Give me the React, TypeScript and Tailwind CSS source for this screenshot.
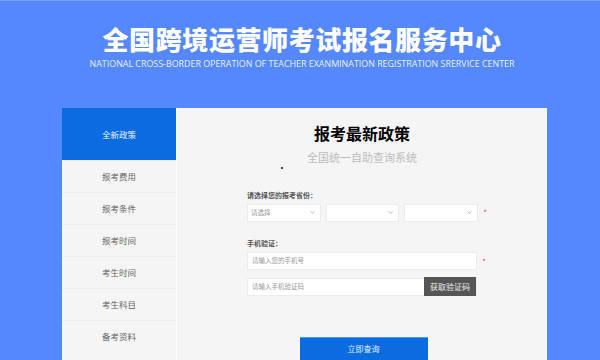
import { ChevronDown } from 'lucide-react'

const cjk = { fontFamily: '"Noto Sans CJK SC", "Noto Sans", sans-serif' }

const menu = ['报考费用', '报考条件', '报考时间', '考生时间', '考生科目', '备考资料']

const Select = ({ label }: { label?: string }) => (
  <div className="flex h-[18px] items-center justify-between border border-[#ececec] bg-white pl-[3px] pr-[4px]">
    <span className="text-[6.5px] text-[#999]">{label}</span>
    <ChevronDown size={7} strokeWidth={2} className="text-[#888]" />
  </div>
)

export default function App() {
  return (
    <div className="h-[360px] w-[600px] overflow-hidden border-t border-[#7aa2fd] bg-[#5488fc]" style={cjk}>
      <div className="flex h-[107px] flex-col items-center pt-[22px] pl-[4px]">
        <h1 className="text-[26px] leading-[32px] font-black tracking-[0.6px] text-white">
          全国跨境运营师考试报名服务中心
        </h1>
        <p className="mt-[3px] text-[8.9px] leading-[12px] text-[#e8efff]" style={{ fontFamily: '"Open Sans", sans-serif' }}>
          NATIONAL CROSS-BORDER OPERATION OF TEACHER EXANMINATION REGISTRATION SRERVICE CENTER
        </p>
      </div>

      <div className="ml-[62px] flex h-[260px] w-[485px] bg-[#f5f5f5]">
        <div className="w-[115px] border-r border-white">
          <div className="flex h-[52px] items-center justify-center bg-[#0a6ce0] text-[8.5px] text-[#e6efff]">全新政策</div>
          {menu.map((m) => (
            <div key={m} className="flex h-[32px] items-center justify-center border-t border-[#ededed] text-[8.5px] text-[#666]">
              {m}
            </div>
          ))}
        </div>

        <div className="flex flex-1 flex-col items-center">
          <h2 className="mt-[15px] text-[16px] leading-[20px] font-bold text-black">报考最新政策</h2>
          <p className="mt-[7px] text-[11px] leading-[14px] text-[#bdbdbd]">全国统一自助查询系统</p>
          <div className="mt-[3px] ml-[-160px] h-[1.5px] w-[1.5px] bg-[#444]" />

          <div className="mt-[21px] w-[230px]">
            <div className="text-[7px] leading-[10px] font-bold text-[#555]">请选择您的报考省份：</div>
            <div className="relative mt-[4px] grid grid-cols-[74px_73px_74px] gap-[5px]">
              <Select label="请选择" />
              <Select />
              <Select />
              <span className="absolute top-[4px] right-[-10px] text-[8px] leading-[10px] text-[#f04848]">*</span>
            </div>

            <div className="mt-[16px] text-[7px] leading-[10px] font-bold text-[#555]">手机验证：</div>
            <div className="relative mt-[4px] flex h-[18px] w-[230px] items-center border border-[#ececec] bg-white pl-[4px] text-[6.5px] text-[#999]">
              请输入您的手机号
              <span className="absolute top-[4px] right-[-10px] text-[8px] leading-[10px] text-[#f04848]">*</span>
            </div>
            <div className="mt-[8px] flex h-[18px] w-[230px] items-center justify-between border border-[#ececec] bg-white pl-[4px] text-[6.5px] text-[#999]">
              请输入手机验证码
              <span className="flex h-[19px] w-[52px] items-center justify-center bg-[#555] text-[8px] text-[#eee]">获取验证码</span>
            </div>
          </div>

          <button className="mt-[41px] ml-[3px] flex h-[30px] w-[128px] items-start justify-center border-t border-[#4b97f0] bg-[#0a6ce0] pt-[5px] text-[8px] text-[#e6efff]">
            立即查询
          </button>
        </div>
      </div>
    </div>
  )
}
